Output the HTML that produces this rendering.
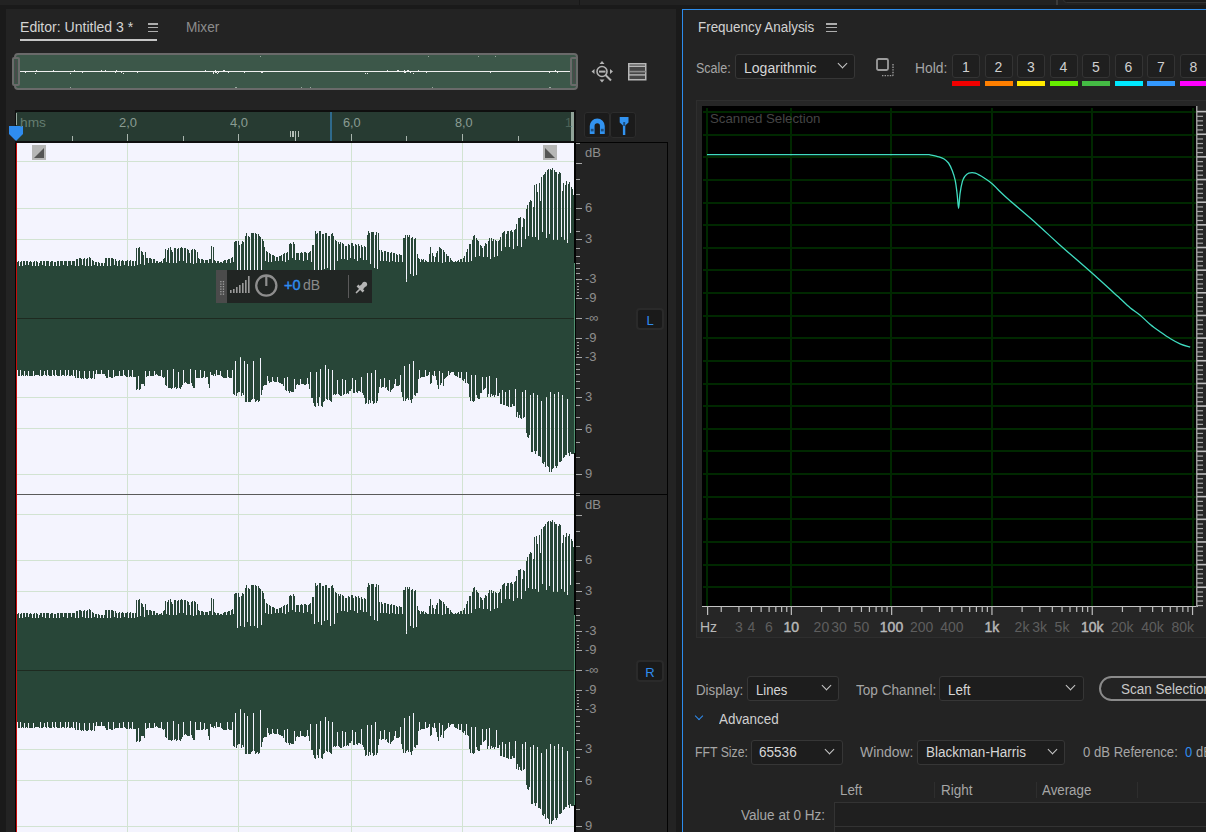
<!DOCTYPE html>
<html><head><meta charset="utf-8">
<style>
*{box-sizing:border-box;margin:0;padding:0}
html,body{width:1206px;height:832px;overflow:hidden;background:#1a1a1a;font-family:"Liberation Sans",sans-serif}
.a{position:absolute}
.t{position:absolute;white-space:nowrap;line-height:16px}
.dbl{position:absolute;left:585px;font-size:13px;color:#8e8e8e;line-height:16px;white-space:nowrap}
.tk{position:absolute;left:576px;width:4px;height:1px;background:#a0a0a0}
.dd{position:absolute;background:#1d1d1d;border:1px solid #363636;border-radius:3px}
.chev{position:absolute;width:7px;height:7px;border-right:1.5px solid #c8c8c8;border-bottom:1.5px solid #c8c8c8;transform:rotate(45deg)}
.hb{position:absolute;background:#1f1f1f;border:1px solid #333;border-radius:3px;color:#cfcfcf;font-size:14px;text-align:center;line-height:24px}
.hc{position:absolute;height:5px}
.lbl{color:#a6a6a6;font-size:13px}
.val{color:#d6d6d6;font-size:13.5px}
</style></head><body>
<!-- top strip -->
<div class="a" style="left:0;top:0;width:1206px;height:5px;background:#222"></div>
<div class="a" style="left:579px;top:0;width:1px;height:5px;background:#181818"></div>
<div class="a" style="left:1056px;top:0;width:2px;height:5px;background:#3a3a3a"></div>
<div class="a" style="left:1063px;top:-4px;width:150px;height:7px;background:#1b1b1b;border:1px solid #333;border-radius:4px"></div>

<!-- LEFT PANEL -->
<div class="a" style="left:6px;top:9px;width:670px;height:823px;background:#232323"></div>
<div class="a" style="left:148px;top:23px;width:10px;height:1.6px;background:#adadad"></div>
<div class="a" style="left:148px;top:26.8px;width:10px;height:1.6px;background:#adadad"></div>
<div class="a" style="left:148px;top:30.6px;width:10px;height:1.6px;background:#adadad"></div>
<div class="a" style="left:20px;top:39px;width:137px;height:2px;background:#c6c6c6"></div>

<!-- overview -->
<div class="a" style="left:14px;top:53px;width:564px;height:37px;background:#3c5749;border:2px solid #6a6a6a;border-radius:4px"></div>
<div class="a" style="left:20px;top:71px;width:550px;height:1px;background:#f0f0f0"></div>
<svg class="a" style="left:0;top:0" width="600" height="100" fill="#e8e8e8" shape-rendering="crispEdges"><rect x="101" y="70" width="1" height="1"/><rect x="116" y="70" width="1" height="1"/><rect x="123" y="73" width="1" height="1"/><rect x="25" y="72" width="1" height="1"/><rect x="121" y="72" width="1" height="1"/><rect x="105" y="70" width="1" height="1"/><rect x="137" y="72" width="1" height="1"/><rect x="36" y="70" width="1" height="1"/><rect x="82" y="72" width="1" height="1"/><rect x="70" y="73" width="1" height="1"/><rect x="35" y="73" width="1" height="1"/><rect x="53" y="70" width="1" height="1"/><rect x="115" y="72" width="1" height="1"/><rect x="74" y="70" width="1" height="1"/><rect x="216" y="72" width="1" height="1"/><rect x="215" y="70" width="1" height="1"/><rect x="213" y="73" width="1" height="1"/><rect x="244" y="72" width="1" height="1"/><rect x="213" y="72" width="1" height="1"/><rect x="205" y="70" width="1" height="1"/><rect x="218" y="72" width="1" height="1"/><rect x="215" y="72" width="1" height="1"/><rect x="223" y="70" width="1" height="1"/><rect x="217" y="73" width="1" height="1"/><rect x="261" y="72" width="1" height="1"/><rect x="216" y="72" width="1" height="1"/><rect x="262" y="72" width="1" height="1"/><rect x="224" y="70" width="1" height="1"/><rect x="228" y="72" width="1" height="1"/><rect x="215" y="72" width="1" height="1"/><rect x="398" y="70" width="1" height="1"/><rect x="407" y="70" width="1" height="1"/><rect x="365" y="73" width="1" height="1"/><rect x="408" y="70" width="1" height="1"/><rect x="404" y="70" width="1" height="1"/><rect x="404" y="72" width="1" height="1"/><rect x="405" y="72" width="1" height="1"/><rect x="426" y="72" width="1" height="1"/><rect x="387" y="70" width="1" height="1"/><rect x="397" y="70" width="1" height="1"/><rect x="410" y="72" width="1" height="1"/><rect x="367" y="73" width="1" height="1"/><rect x="418" y="70" width="1" height="1"/><rect x="413" y="73" width="1" height="1"/><rect x="490" y="72" width="1" height="1"/><rect x="490" y="72" width="1" height="1"/><rect x="557" y="72" width="1" height="1"/><rect x="549" y="72" width="1" height="1"/><rect x="555" y="70" width="1" height="1"/><rect x="70" y="87" width="1" height="1" fill="#9aaaa0"/><rect x="235" y="87" width="1" height="1" fill="#9aaaa0"/><rect x="236" y="87" width="1" height="1" fill="#9aaaa0"/><rect x="260" y="56" width="1" height="1" fill="#9aaaa0"/><rect x="301" y="87" width="1" height="1" fill="#9aaaa0"/><rect x="310" y="87" width="1" height="1" fill="#9aaaa0"/><rect x="428" y="56" width="1" height="1" fill="#9aaaa0"/><rect x="432" y="87" width="1" height="1" fill="#9aaaa0"/><rect x="478" y="56" width="1" height="1" fill="#9aaaa0"/><rect x="495" y="56" width="1" height="1" fill="#9aaaa0"/><rect x="549" y="87" width="1" height="1" fill="#9aaaa0"/><rect x="550" y="87" width="1" height="1" fill="#9aaaa0"/></svg>
<div class="a" style="left:12px;top:57px;width:8px;height:29px;background:#3c5749;border:2px solid #6a6a6a;border-radius:2px"></div>
<div class="a" style="left:15px;top:60px;width:2px;height:23px;background:#4a4a4a"></div>
<div class="a" style="left:570px;top:57px;width:8px;height:29px;background:#3c5749;border:2px solid #6a6a6a;border-radius:2px"></div>
<div class="a" style="left:573px;top:60px;width:2px;height:23px;background:#4a4a4a"></div>

<!-- zoom icon -->
<svg class="a" style="left:588px;top:58px" width="28" height="28" viewBox="0 0 28 28">
 <circle cx="14" cy="13.5" r="5" fill="none" stroke="#b4b4b4" stroke-width="1.6"/>
 <rect x="11" y="12.6" width="6.5" height="2" fill="#b4b4b4"/>
 <line x1="17.5" y1="17" x2="23" y2="22.5" stroke="#b4b4b4" stroke-width="2"/>
 <path d="M14 3 L16.5 6 H11.5Z M14 24.5 L16.5 21.5 H11.5Z M3.5 13.5 L6.5 11 V16Z M25 13.5 L22 11 V16Z" fill="#b4b4b4"/>
</svg>
<!-- list icon -->
<svg class="a" style="left:626px;top:61px" width="24" height="22" viewBox="0 0 24 22">
 <rect x="2.75" y="2.75" width="17" height="16" fill="#464646" stroke="#b6b6b6" stroke-width="1.5"/>
 <rect x="3" y="4.6" width="17" height="1.4" fill="#b6b6b6"/>
 <rect x="3" y="9.8" width="17" height="1.6" fill="#8c8c8c"/>
 <rect x="3" y="13.2" width="17" height="1.4" fill="#b6b6b6"/>
</svg>

<!-- ruler -->
<div class="a" style="left:15px;top:110px;width:561px;height:33px;background:#0f0f0f"></div>
<div class="a" style="left:16px;top:112px;width:558px;height:29px;background:#273b32"></div>
<div class="a" style="left:16px;top:113px;width:1px;height:12px;background:#9aa9a1"></div>
<div class="a" style="left:127px;top:134px;width:1px;height:7px;background:#a8b4ad"></div>
<div class="a" style="left:238px;top:134px;width:1px;height:7px;background:#a8b4ad"></div>
<div class="a" style="left:351px;top:134px;width:1px;height:7px;background:#a8b4ad"></div>
<div class="a" style="left:462px;top:134px;width:1px;height:7px;background:#a8b4ad"></div>
<div class="a" style="left:72px;top:136px;width:1px;height:5px;background:#a8b4ad"></div>
<div class="a" style="left:183px;top:136px;width:1px;height:5px;background:#a8b4ad"></div>
<div class="a" style="left:406px;top:136px;width:1px;height:5px;background:#a8b4ad"></div>
<div class="a" style="left:518px;top:136px;width:1px;height:5px;background:#a8b4ad"></div>
<div class="a" style="left:289.5px;top:131px;width:1.3px;height:6px;background:#b4beb8"></div>
<div class="a" style="left:292.3px;top:131px;width:1.3px;height:6px;background:#b4beb8"></div>
<div class="a" style="left:295.2px;top:131px;width:1.3px;height:10px;background:#b4beb8"></div>
<div class="a" style="left:298px;top:131px;width:1.3px;height:6px;background:#b4beb8"></div>
<div class="a" style="left:330px;top:112px;width:1.5px;height:29px;background:#2f6a8c"></div>
<div class="a" style="left:571px;top:112px;width:3px;height:29px;background:#90a398"></div>
<!-- playhead -->
<svg class="a" style="left:9px;top:126px" width="14" height="16" viewBox="0 0 14 16"><path d="M0 0H14V8L7 15L0 8Z" fill="#2f8cef"/></svg>

<!-- snap buttons -->
<div class="a" style="left:584px;top:112px;width:26px;height:26px;background:#1b1b1b;border:1px solid #2c2c2c;border-radius:3px"></div>
<div class="a" style="left:610px;top:112px;width:26px;height:26px;background:#1b1b1b;border:1px solid #2c2c2c;border-radius:3px"></div>
<svg class="a" style="left:584px;top:112px" width="26" height="26" viewBox="0 0 26 26">
 <path d="M5.75 22 V14 A7.5 7.5 0 0 1 20.75 14 V22 H15.95 V14 A2.7 2.7 0 0 0 10.55 14 V22 Z" fill="#3293f0"/>
 <rect x="6.8" y="16.8" width="2.8" height="2.6" fill="#1d4f80"/><rect x="16.9" y="16.8" width="2.8" height="2.6" fill="#1d4f80"/>
</svg>
<svg class="a" style="left:610px;top:112px" width="26" height="26" viewBox="0 0 26 26">
 <path d="M9.7 5 H18.5 V10.6 L15.3 13.5 V23 H12.9 V13.5 L9.7 10.6Z" fill="#3293f0"/>
 <rect x="13.2" y="10" width="2" height="4" fill="#1d4f80"/>
</svg>

<!-- dB ruler panels -->
<div class="a" style="left:574px;top:142px;width:94px;height:690px;background:#030303"></div>
<div class="a" style="left:576px;top:143px;width:91px;height:351px;background:#232323"></div>
<div class="a" style="left:576px;top:495px;width:91px;height:337px;background:#232323"></div>
<div class="dbl" style="top:144.5px">dB</div><div class="dbl" style="top:199.5px">6</div><div class="dbl" style="top:420.5px">6</div><div class="dbl" style="top:231.0px">3</div><div class="dbl" style="top:389.0px">3</div><div class="dbl" style="top:271.0px">-3</div><div class="dbl" style="top:349.0px">-3</div><div class="dbl" style="top:290.0px">-9</div><div class="dbl" style="top:330.0px">-9</div><div class="dbl" style="top:310.0px">-∞</div><div class="dbl" style="top:465.5px">9</div><div class="tk" style="top:318.0px;width:6px;background:#a8a8a8"></div><div class="tk" style="top:298.0px;width:6px;background:#a8a8a8"></div><div class="tk" style="top:338.0px;width:6px;background:#a8a8a8"></div><div class="tk" style="top:279.0px;width:6px;background:#a8a8a8"></div><div class="tk" style="top:357.0px;width:6px;background:#a8a8a8"></div><div class="tk" style="top:239.0px;width:6px;background:#a8a8a8"></div><div class="tk" style="top:397.0px;width:6px;background:#a8a8a8"></div><div class="tk" style="top:207.5px;width:6px;background:#a8a8a8"></div><div class="tk" style="top:428.5px;width:6px;background:#a8a8a8"></div><div class="tk" style="top:162.5px;width:6px;background:#a8a8a8"></div><div class="tk" style="top:473.5px;width:6px;background:#a8a8a8"></div><div class="tk" style="top:272.5px"></div><div class="tk" style="top:363.5px"></div><div class="tk" style="top:267.5px"></div><div class="tk" style="top:368.5px"></div><div class="tk" style="top:262.5px"></div><div class="tk" style="top:373.5px"></div><div class="tk" style="top:255.5px"></div><div class="tk" style="top:380.5px"></div><div class="tk" style="top:248.0px"></div><div class="tk" style="top:388.0px"></div><div class="tk" style="top:231.0px"></div><div class="tk" style="top:405.0px"></div><div class="tk" style="top:219.0px"></div><div class="tk" style="top:417.0px"></div><div class="tk" style="top:194.0px"></div><div class="tk" style="top:442.0px"></div><div class="tk" style="top:179.0px"></div><div class="tk" style="top:457.0px"></div><div class="tk" style="top:143.0px"></div><div class="tk" style="top:493.0px"></div><div class="tk" style="top:294.5px;left:577px;width:2px"></div><div class="tk" style="top:341.5px;left:577px;width:2px"></div><div class="tk" style="top:291.5px;left:577px;width:2px"></div><div class="tk" style="top:344.5px;left:577px;width:2px"></div><div class="tk" style="top:288.5px;left:577px;width:2px"></div><div class="tk" style="top:347.5px;left:577px;width:2px"></div><div class="tk" style="top:285.5px;left:577px;width:2px"></div><div class="tk" style="top:350.5px;left:577px;width:2px"></div><div class="tk" style="top:282.5px;left:577px;width:2px"></div><div class="tk" style="top:353.5px;left:577px;width:2px"></div>
<div class="dbl" style="top:496.5px">dB</div><div class="dbl" style="top:551.5px">6</div><div class="dbl" style="top:772.5px">6</div><div class="dbl" style="top:583.0px">3</div><div class="dbl" style="top:741.0px">3</div><div class="dbl" style="top:623.0px">-3</div><div class="dbl" style="top:701.0px">-3</div><div class="dbl" style="top:642.0px">-9</div><div class="dbl" style="top:682.0px">-9</div><div class="dbl" style="top:662.0px">-∞</div><div class="dbl" style="top:817.5px">9</div><div class="tk" style="top:670.0px;width:6px;background:#a8a8a8"></div><div class="tk" style="top:650.0px;width:6px;background:#a8a8a8"></div><div class="tk" style="top:690.0px;width:6px;background:#a8a8a8"></div><div class="tk" style="top:631.0px;width:6px;background:#a8a8a8"></div><div class="tk" style="top:709.0px;width:6px;background:#a8a8a8"></div><div class="tk" style="top:591.0px;width:6px;background:#a8a8a8"></div><div class="tk" style="top:749.0px;width:6px;background:#a8a8a8"></div><div class="tk" style="top:559.5px;width:6px;background:#a8a8a8"></div><div class="tk" style="top:780.5px;width:6px;background:#a8a8a8"></div><div class="tk" style="top:514.5px;width:6px;background:#a8a8a8"></div><div class="tk" style="top:825.5px;width:6px;background:#a8a8a8"></div><div class="tk" style="top:624.5px"></div><div class="tk" style="top:715.5px"></div><div class="tk" style="top:619.5px"></div><div class="tk" style="top:720.5px"></div><div class="tk" style="top:614.5px"></div><div class="tk" style="top:725.5px"></div><div class="tk" style="top:607.5px"></div><div class="tk" style="top:732.5px"></div><div class="tk" style="top:600.0px"></div><div class="tk" style="top:740.0px"></div><div class="tk" style="top:583.0px"></div><div class="tk" style="top:757.0px"></div><div class="tk" style="top:571.0px"></div><div class="tk" style="top:769.0px"></div><div class="tk" style="top:546.0px"></div><div class="tk" style="top:794.0px"></div><div class="tk" style="top:531.0px"></div><div class="tk" style="top:809.0px"></div><div class="tk" style="top:495.0px"></div><div class="tk" style="top:646.5px;left:577px;width:2px"></div><div class="tk" style="top:693.5px;left:577px;width:2px"></div><div class="tk" style="top:643.5px;left:577px;width:2px"></div><div class="tk" style="top:696.5px;left:577px;width:2px"></div><div class="tk" style="top:640.5px;left:577px;width:2px"></div><div class="tk" style="top:699.5px;left:577px;width:2px"></div><div class="tk" style="top:637.5px;left:577px;width:2px"></div><div class="tk" style="top:702.5px;left:577px;width:2px"></div><div class="tk" style="top:634.5px;left:577px;width:2px"></div><div class="tk" style="top:705.5px;left:577px;width:2px"></div>
<div class="a" style="left:636px;top:308px;width:28px;height:22px;background:#1a1a1a;border:2px solid #2a2a2a;border-radius:4px;color:#2f8cef;font-size:13px;text-align:center;line-height:19px;padding-top:1px">L</div>
<div class="a" style="left:636px;top:660px;width:28px;height:22px;background:#1a1a1a;border:2px solid #2a2a2a;border-radius:4px;color:#2f8cef;font-size:13px;text-align:center;line-height:19px;padding-top:1px">R</div>

<!-- waveform -->
<svg class="a" style="left:0;top:0" width="1206" height="832" viewBox="0 0 1206 832" shape-rendering="crispEdges">
 <rect x="16" y="143" width="558" height="351" fill="#f4f4fe"/>
 <rect x="16" y="495" width="558" height="337" fill="#f4f4fe"/>
 <rect x="16" y="494" width="558" height="1" fill="#5a5a5a"/>
 <rect x="16" y="161" width="558" height="1" fill="#d2e3d2"/><rect x="16" y="208" width="558" height="1" fill="#d2e3d2"/><rect x="16" y="239" width="558" height="1" fill="#d2e3d2"/><rect x="16" y="279" width="558" height="1" fill="#d2e3d2"/><rect x="16" y="297" width="558" height="1" fill="#d2e3d2"/><rect x="16" y="338" width="558" height="1" fill="#d2e3d2"/><rect x="16" y="357" width="558" height="1" fill="#d2e3d2"/><rect x="16" y="397" width="558" height="1" fill="#d2e3d2"/><rect x="16" y="428" width="558" height="1" fill="#d2e3d2"/><rect x="16" y="474" width="558" height="1" fill="#d2e3d2"/><rect x="127" y="143" width="1" height="351" fill="#d2e3d2"/><rect x="238" y="143" width="1" height="351" fill="#d2e3d2"/><rect x="351" y="143" width="1" height="351" fill="#d2e3d2"/><rect x="462" y="143" width="1" height="351" fill="#d2e3d2"/>
 <rect x="16" y="514" width="558" height="1" fill="#d2e3d2"/><rect x="16" y="560" width="558" height="1" fill="#d2e3d2"/><rect x="16" y="591" width="558" height="1" fill="#d2e3d2"/><rect x="16" y="631" width="558" height="1" fill="#d2e3d2"/><rect x="16" y="649" width="558" height="1" fill="#d2e3d2"/><rect x="16" y="690" width="558" height="1" fill="#d2e3d2"/><rect x="16" y="709" width="558" height="1" fill="#d2e3d2"/><rect x="16" y="749" width="558" height="1" fill="#d2e3d2"/><rect x="16" y="780" width="558" height="1" fill="#d2e3d2"/><rect x="16" y="826" width="558" height="1" fill="#d2e3d2"/><rect x="127" y="495" width="1" height="337" fill="#d2e3d2"/><rect x="238" y="495" width="1" height="337" fill="#d2e3d2"/><rect x="351" y="495" width="1" height="337" fill="#d2e3d2"/><rect x="462" y="495" width="1" height="337" fill="#d2e3d2"/>
 <path d="M17,262V262H18V261H19V266H20V262H21V261H22V266H23V261H24V261H25V265H26V261H27V261H28V265H29V262H30V261H31V262H32V266H33V262H34V261H35V266H36V261H37V262H38V266H39V263H40V261H41V261H42V265H43V261H44V261H45V266H46V261H47V261H48V261H49V266H50V262H51V261H52V261H53V266H54V262H55V262H56V266H57V261H58V261H59V266H60V261H61V261H62V261H63V265H64V261H65V261H66V261H67V266H68V261H69V261H70V261H71V265H72V261H73V261H74V261H75V266H76V259H77V259H78V266H79V258H80V258H81V259H82V265H83V259H84V258H85V266H86V259H87V258H88V266H89V257H90V258H91V266H92V260H93V261H94V265H95V262H96V262H97V266H98V262H99V263H100V266H101V263H102V263H103V266H104V263H105V258H106V258H107V266H108V258H109V258H110V266H111V258H112V258H113V259H114V265H115V259H116V261H117V266H118V261H119V260H120V266H121V261H122V260H123V261H124V265H125V261H126V261H127V260H128V266H129V261H130V260H131V266H132V261H133V261H134V266H135V261H136V248H137V265H138V248H139V247H140V264H141V251H142V252H143V255H144V265H145V252H146V258H147V258H148V263H149V258H150V258H151V259H152V263H153V259H154V259H155V263H156V261H157V261H158V263H159V262H160V262H161V261H162V263H163V259H164V258H165V249H166V262H167V250H168V248H169V263H170V247H171V250H172V252H173V263H174V248H175V248H176V263H177V249H178V248H179V261H180V248H181V247H182V248H183V261H184V248H185V248H186V263H187V249H188V250H189V253H190V263H191V250H192V249H193V264H194V249H195V250H196V263H197V252H198V258H199V259H200V263H201V259H202V259H203V260H204V263H205V260H206V260H207V260H208V263H209V259H210V259H211V246H212V263H213V247H214V260H215V261H216V263H217V261H218V261H219V263H220V262H221V262H222V263H223V261H224V260H225V260H226V263H227V260H228V259H229V259H230V263H231V258H232V257H233V262H234V242H235V241H236V241H237V276H238V241H239V245H240V274H241V244H242V241H243V242H244V275H245V236H246V233H247V270H248V236H249V237H250V274H251V233H252V233H253V233H254V274H255V233H256V234H257V276H258V234H259V236H260V237H261V273H262V239H263V241H264V247H265V261H266V251H267V252H268V262H269V253H270V254H271V262H272V255H273V255H274V256H275V261H276V257H277V257H278V261H279V256H280V256H281V255H282V261H283V254H284V253H285V262H286V253H287V252H288V260H289V244H290V243H291V244H292V258H293V242H294V244H295V260H296V253H297V253H298V253H299V260H300V253H301V252H302V253H303V261H304V252H305V252H306V253H307V260H308V253H309V252H310V251H311V262H312V245H313V245H314V272H315V231H316V234H317V233H318V270H319V231H320V231H321V273H322V234H323V234H324V269H325V233H326V233H327V268H328V236H329V236H330V274H331V234H332V233H333V236H334V272H335V240H336V241H337V261H338V242H339V244H340V242H341V259H342V243H343V244H344V259H345V246H346V246H347V260H348V244H349V245H350V258H351V243H352V243H353V246H354V259H355V244H356V245H357V261H358V244H359V246H360V258H361V245H362V247H363V260H364V246H365V247H366V260H367V235H368V231H369V233H370V264H371V232H372V232H373V232H374V268H375V235H376V232H377V269H378V233H379V250H380V261H381V250H382V252H383V261H384V251H385V251H386V261H387V252H388V252H389V262H390V253H391V252H392V261H393V253H394V253H395V262H396V254H397V255H398V262H399V254H400V255H401V255H402V262H403V238H404V238H405V235H406V282H407V235H408V237H409V235H410V274H411V238H412V237H413V276H414V239H415V238H416V275H417V254H418V258H419V259H420V262H421V259H422V260H423V259H424V262H425V260H426V261H427V262H428V262H429V254H430V247H431V262H432V253H433V256H434V262H435V257H436V253H437V251H438V262H439V247H440V248H441V249H442V263H443V250H444V252H445V262H446V254H447V256H448V256H449V262H450V258H451V260H452V261H453V262H454V262H455V261H456V262H457V261H458V260H459V262H460V259H461V259H462V262H463V258H464V256H465V262H466V252H467V249H468V262H469V244H470V244H471V261H472V240H473V236H474V235H475V257H476V238H477V240H478V241H479V256H480V245H481V246H482V248H483V257H484V246H485V243H486V244H487V257H488V241H489V238H490V259H491V238H492V241H493V239H494V257H495V240H496V241H497V256H498V241H499V240H500V237H501V251H502V233H503V232H504V231H505V247H506V234H507V231H508V231H509V247H510V231H511V230H512V232H513V249H514V230H515V229H516V224H517V246H518V218H519V218H520V217H521V247H522V227H523V218H524V219H525V239H526V209H527V205H528V236H529V202H530V200H531V201H532V237H533V207H534V185H535V237H536V184H537V192H538V240H539V183H540V201H541V177H542V232H543V175H544V174H545V172H546V238H547V170H548V169H549V234H550V169H551V170H552V168H553V240H554V170H555V172H556V172H557V240H558V174H559V172H560V173H561V237H562V191H563V183H564V240H565V185H566V181H567V243H568V184H569V182H570V233H571V187H572V189H573V195H574V454H573V454H572V454H571V452H570V456H569V453H568V399H567V455H566V455H565V457H564V458H563V395H562V461H561V462H560V462H559V392H558V466H557V468H556V466H555V394H554V468H553V469H552V472H551V392H550V472H549V467H548V466H547V397H546V467H545V462H544V464H543V463H542V401H541V457H540V456H539V456H538V395H537V451H536V454H535V451H534V393H533V452H532V452H531V395H530V435H529V438H528V437H527V433H526V390H525V417H524V418H523V392H522V419H521V418H520V415H519V418H518V412H517V417H516V389H515V406H514V406H513V404H512V407H511V407H510V390H509V407H508V406H507V406H506V392H505V405H504V405H503V390H502V404H501V404H500V393H499V396H498V396H497V378H496V395H495V397H494V395H493V396H492V394H491V397H490V376H489V394H488V397H487V377H486V388H485V389H484V390H483V377H482V393H481V393H480V399H479V399H478V398H477V395H476V375H475V401H474V402H473V401H472V375H471V401H470V397H469V384H468V383H467V372H466V383H465V379H464V381H463V380H462V372H461V378H460V378H459V372H458V377H457V376H456V376H455V375H454V372H453V372H452V372H451V373H450V375H449V371H448V376H447V377H446V378H445V379H444V386H443V373H442V383H441V385H440V371H439V389H438V385H437V380H436V376H435V371H434V376H433V375H432V383H431V384H430V372H429V375H428V376H427V376H426V370H425V377H424V377H423V377H422V377H421V378H420V370H419V379H418V393H417V393H416V396H415V395H414V361H413V399H412V403H411V400H410V364H409V400H408V398H407V399H406V401H405V366H404V401H403V397H402V392H401V375H400V385H399V386H398V386H397V386H396V379H395V384H394V388H393V389H392V390H391V392H390V380H389V391H388V390H387V387H386V388H385V378H384V387H383V387H382V388H381V379H380V387H379V393H378V401H377V403H376V370H375V403H374V404H373V401H372V373H371V403H370V400H369V404H368V373H367V403H366V404H365V398H364V395H363V393H362V377H361V392H360V391H359V391H358V393H357V392H356V380H355V393H354V393H353V378H352V389H351V391H350V391H349V394H348V393H347V394H346V380H345V394H344V395H343V379H342V396H341V396H340V395H339V394H338V380H337V394H336V395H335V394H334V395H333V370H332V402H331V401H330V400H329V369H328V400H327V399H326V365H325V401H324V402H323V407H322V406H321V369H320V397H319V406H318V403H317V372H316V407H315V406H314V403H313V398H312V398H311V372H310V389H309V384H308V378H307V384H306V385H305V385H304V384H303V384H302V384H301V379H300V385H299V385H298V384H297V385H296V389H295V379H294V392H293V392H292V392H291V391H290V393H289V391H288V377H287V391H286V390H285V378H284V386H283V384H282V384H281V383H280V383H279V382H278V377H277V382H276V382H275V382H274V381H273V377H272V382H271V382H270V383H269V381H268V376H267V385H266V385H265V385H264V386H263V390H262V395H261V358H260V401H259V402H258V400H257V401H256V402H255V399H254V361H253V399H252V400H251V402H250V402H249V402H248V364H247V402H246V402H245V361H244V395H243V393H242V396H241V357H240V392H239V392H238V393H237V396H236V361H235V395H234V394H233V370H232V378H231V378H230V378H229V377H228V370H227V378H226V378H225V378H224V378H223V377H222V376H221V371H220V375H219V375H218V375H217V370H216V376H215V374H214V376H213V375H212V375H211V372H210V388H209V384H208V377H207V377H206V378H205V371H204V377H203V378H202V378H201V370H200V378H199V378H198V378H197V378H196V370H195V388H194V388H193V386H192V383H191V369H190V384H189V384H188V384H187V383H186V382H185V383H184V370H183V385H182V387H181V389H180V388H179V372H178V388H177V389H176V387H175V388H174V369H173V388H172V389H171V388H170V388H169V388H168V370H167V386H166V385H165V377H164V378H163V377H162V370H161V376H160V376H159V376H158V375H157V374H156V375H155V371H154V376H153V376H152V376H151V376H150V371H149V376H148V376H147V377H146V371H145V386H144V384H143V384H142V384H141V389H140V390H139V376H138V389H137V390H136V377H135V377H134V377H133V370H132V377H131V376H130V377H129V370H128V377H127V377H126V376H125V375H124V370H123V376H122V376H121V376H120V371H119V376H118V376H117V376H116V376H115V377H114V370H113V378H112V378H111V377H110V377H109V370H108V378H107V378H106V376H105V374H104V374H103V374H102V370H101V374H100V374H99V374H98V374H97V370H96V374H95V379H94V371H93V378H92V379H91V378H90V371H89V378H88V379H87V379H86V378H85V371H84V379H83V378H82V379H81V378H80V371H79V378H78V378H77V370H76V378H75V376H74V370H73V376H72V375H71V376H70V376H69V370H68V375H67V376H66V370H65V376H64V375H63V375H62V376H61V370H60V376H59V376H58V376H57V375H56V370H55V376H54V375H53V370H52V376H51V376H50V376H49V375H48V370H47V376H46V375H45V371H44V375H43V376H42V376H41V370H40V376H39V375H38V375H37V375H36V375H35V376H34V371H33V376H32V376H31V376H30V376H29V371H28V376H27V375H26V376H25V371H24V376H23V375H22V376H21V370H20V376H19V376H18V370H17V376Z" fill="#284638"/>
 <path d="M17,614V614H18V613H19V618H20V614H21V613H22V618H23V613H24V613H25V617H26V613H27V613H28V617H29V614H30V613H31V614H32V618H33V614H34V613H35V618H36V613H37V614H38V618H39V615H40V613H41V613H42V617H43V613H44V613H45V618H46V613H47V613H48V613H49V618H50V614H51V613H52V613H53V618H54V614H55V614H56V618H57V613H58V613H59V618H60V613H61V613H62V613H63V617H64V613H65V613H66V613H67V618H68V613H69V613H70V613H71V617H72V613H73V613H74V613H75V618H76V611H77V611H78V618H79V610H80V610H81V611H82V617H83V611H84V610H85V618H86V611H87V610H88V618H89V609H90V610H91V618H92V612H93V613H94V617H95V614H96V614H97V618H98V614H99V615H100V618H101V615H102V615H103V618H104V615H105V610H106V610H107V618H108V610H109V610H110V618H111V610H112V610H113V611H114V617H115V611H116V613H117V618H118V613H119V612H120V618H121V613H122V612H123V613H124V617H125V613H126V613H127V612H128V618H129V613H130V612H131V618H132V613H133V613H134V618H135V613H136V600H137V617H138V600H139V599H140V616H141V603H142V604H143V607H144V617H145V604H146V610H147V610H148V615H149V610H150V610H151V611H152V615H153V611H154V611H155V615H156V613H157V613H158V615H159V614H160V614H161V613H162V615H163V611H164V610H165V601H166V614H167V602H168V600H169V615H170V599H171V602H172V604H173V615H174V600H175V600H176V615H177V601H178V600H179V613H180V600H181V599H182V600H183V613H184V600H185V600H186V615H187V601H188V602H189V605H190V615H191V602H192V601H193V616H194V601H195V602H196V615H197V604H198V610H199V611H200V615H201V611H202V611H203V612H204V615H205V612H206V612H207V612H208V615H209V611H210V611H211V598H212V615H213V599H214V612H215V613H216V615H217V613H218V613H219V615H220V614H221V614H222V615H223V613H224V612H225V612H226V615H227V612H228V611H229V611H230V615H231V610H232V609H233V614H234V594H235V593H236V593H237V628H238V593H239V597H240V626H241V596H242V593H243V594H244V627H245V588H246V585H247V622H248V588H249V589H250V626H251V585H252V585H253V585H254V626H255V585H256V586H257V628H258V586H259V588H260V589H261V625H262V591H263V593H264V599H265V613H266V603H267V604H268V614H269V605H270V606H271V614H272V607H273V607H274V608H275V613H276V609H277V609H278V613H279V608H280V608H281V607H282V613H283V606H284V605H285V614H286V605H287V604H288V612H289V596H290V595H291V596H292V610H293V594H294V596H295V612H296V605H297V605H298V605H299V612H300V605H301V604H302V605H303V613H304V604H305V604H306V605H307V612H308V605H309V604H310V603H311V614H312V597H313V597H314V624H315V583H316V586H317V585H318V622H319V583H320V583H321V625H322V586H323V586H324V621H325V585H326V585H327V620H328V588H329V588H330V626H331V586H332V585H333V588H334V624H335V592H336V593H337V613H338V594H339V596H340V594H341V611H342V595H343V596H344V611H345V598H346V598H347V612H348V596H349V597H350V610H351V595H352V595H353V598H354V611H355V596H356V597H357V613H358V596H359V598H360V610H361V597H362V599H363V612H364V598H365V599H366V612H367V587H368V583H369V585H370V616H371V584H372V584H373V584H374V620H375V587H376V584H377V621H378V585H379V602H380V613H381V602H382V604H383V613H384V603H385V603H386V613H387V604H388V604H389V614H390V605H391V604H392V613H393V605H394V605H395V614H396V606H397V607H398V614H399V606H400V607H401V607H402V614H403V590H404V590H405V587H406V634H407V587H408V589H409V587H410V626H411V590H412V589H413V628H414V591H415V590H416V627H417V606H418V610H419V611H420V614H421V611H422V612H423V611H424V614H425V612H426V613H427V614H428V614H429V606H430V599H431V614H432V605H433V608H434V614H435V609H436V605H437V603H438V614H439V599H440V600H441V601H442V615H443V602H444V604H445V614H446V606H447V608H448V608H449V614H450V610H451V612H452V613H453V614H454V614H455V613H456V614H457V613H458V612H459V614H460V611H461V611H462V614H463V610H464V608H465V614H466V604H467V601H468V614H469V596H470V596H471V613H472V592H473V588H474V587H475V609H476V590H477V592H478V593H479V608H480V597H481V598H482V600H483V609H484V598H485V595H486V596H487V609H488V593H489V590H490V611H491V590H492V593H493V591H494V609H495V592H496V593H497V608H498V593H499V592H500V589H501V603H502V585H503V584H504V583H505V599H506V586H507V583H508V583H509V599H510V583H511V582H512V584H513V601H514V582H515V581H516V576H517V598H518V570H519V570H520V569H521V599H522V579H523V570H524V571H525V591H526V561H527V557H528V588H529V554H530V552H531V553H532V589H533V559H534V537H535V589H536V536H537V544H538V592H539V535H540V553H541V529H542V584H543V527H544V526H545V524H546V590H547V522H548V521H549V586H550V521H551V522H552V520H553V592H554V522H555V524H556V524H557V592H558V526H559V524H560V525H561V589H562V543H563V535H564V592H565V537H566V533H567V595H568V536H569V534H570V585H571V539H572V541H573V547H574V806H573V806H572V806H571V804H570V808H569V805H568V751H567V807H566V807H565V809H564V810H563V747H562V813H561V814H560V814H559V744H558V818H557V820H556V818H555V746H554V820H553V821H552V824H551V744H550V824H549V819H548V818H547V749H546V819H545V814H544V816H543V815H542V753H541V809H540V808H539V808H538V747H537V803H536V806H535V803H534V745H533V804H532V804H531V747H530V787H529V790H528V789H527V785H526V742H525V769H524V770H523V744H522V771H521V770H520V767H519V770H518V764H517V769H516V741H515V758H514V758H513V756H512V759H511V759H510V742H509V759H508V758H507V758H506V744H505V757H504V757H503V742H502V756H501V756H500V745H499V748H498V748H497V730H496V747H495V749H494V747H493V748H492V746H491V749H490V728H489V746H488V749H487V729H486V740H485V741H484V742H483V729H482V745H481V745H480V751H479V751H478V750H477V747H476V727H475V753H474V754H473V753H472V727H471V753H470V749H469V736H468V735H467V724H466V735H465V731H464V733H463V732H462V724H461V730H460V730H459V724H458V729H457V728H456V728H455V727H454V724H453V724H452V724H451V725H450V727H449V723H448V728H447V729H446V730H445V731H444V738H443V725H442V735H441V737H440V723H439V741H438V737H437V732H436V728H435V723H434V728H433V727H432V735H431V736H430V724H429V727H428V728H427V728H426V722H425V729H424V729H423V729H422V729H421V730H420V722H419V731H418V745H417V745H416V748H415V747H414V713H413V751H412V755H411V752H410V716H409V752H408V750H407V751H406V753H405V718H404V753H403V749H402V744H401V727H400V737H399V738H398V738H397V738H396V731H395V736H394V740H393V741H392V742H391V744H390V732H389V743H388V742H387V739H386V740H385V730H384V739H383V739H382V740H381V731H380V739H379V745H378V753H377V755H376V722H375V755H374V756H373V753H372V725H371V755H370V752H369V756H368V725H367V755H366V756H365V750H364V747H363V745H362V729H361V744H360V743H359V743H358V745H357V744H356V732H355V745H354V745H353V730H352V741H351V743H350V743H349V746H348V745H347V746H346V732H345V746H344V747H343V731H342V748H341V748H340V747H339V746H338V732H337V746H336V747H335V746H334V747H333V722H332V754H331V753H330V752H329V721H328V752H327V751H326V717H325V753H324V754H323V759H322V758H321V721H320V749H319V758H318V755H317V724H316V759H315V758H314V755H313V750H312V750H311V724H310V741H309V736H308V730H307V736H306V737H305V737H304V736H303V736H302V736H301V731H300V737H299V737H298V736H297V737H296V741H295V731H294V744H293V744H292V744H291V743H290V745H289V743H288V729H287V743H286V742H285V730H284V738H283V736H282V736H281V735H280V735H279V734H278V729H277V734H276V734H275V734H274V733H273V729H272V734H271V734H270V735H269V733H268V728H267V737H266V737H265V737H264V738H263V742H262V747H261V710H260V753H259V754H258V752H257V753H256V754H255V751H254V713H253V751H252V752H251V754H250V754H249V754H248V716H247V754H246V754H245V713H244V747H243V745H242V748H241V709H240V744H239V744H238V745H237V748H236V713H235V747H234V746H233V722H232V730H231V730H230V730H229V729H228V722H227V730H226V730H225V730H224V730H223V729H222V728H221V723H220V727H219V727H218V727H217V722H216V728H215V726H214V728H213V727H212V727H211V724H210V740H209V736H208V729H207V729H206V730H205V723H204V729H203V730H202V730H201V722H200V730H199V730H198V730H197V730H196V722H195V740H194V740H193V738H192V735H191V721H190V736H189V736H188V736H187V735H186V734H185V735H184V722H183V737H182V739H181V741H180V740H179V724H178V740H177V741H176V739H175V740H174V721H173V740H172V741H171V740H170V740H169V740H168V722H167V738H166V737H165V729H164V730H163V729H162V722H161V728H160V728H159V728H158V727H157V726H156V727H155V723H154V728H153V728H152V728H151V728H150V723H149V728H148V728H147V729H146V723H145V738H144V736H143V736H142V736H141V741H140V742H139V728H138V741H137V742H136V729H135V729H134V729H133V722H132V729H131V728H130V729H129V722H128V729H127V729H126V728H125V727H124V722H123V728H122V728H121V728H120V723H119V728H118V728H117V728H116V728H115V729H114V722H113V730H112V730H111V729H110V729H109V722H108V730H107V730H106V728H105V726H104V726H103V726H102V722H101V726H100V726H99V726H98V726H97V722H96V726H95V731H94V723H93V730H92V731H91V730H90V723H89V730H88V731H87V731H86V730H85V723H84V731H83V730H82V731H81V730H80V723H79V730H78V730H77V722H76V730H75V728H74V722H73V728H72V727H71V728H70V728H69V722H68V727H67V728H66V722H65V728H64V727H63V727H62V728H61V722H60V728H59V728H58V728H57V727H56V722H55V728H54V727H53V722H52V728H51V728H50V728H49V727H48V722H47V728H46V727H45V723H44V727H43V728H42V728H41V722H40V728H39V727H38V727H37V727H36V727H35V728H34V723H33V728H32V728H31V728H30V728H29V723H28V728H27V727H26V728H25V723H24V728H23V727H22V728H21V722H20V728H19V728H18V722H17V728Z" fill="#284638"/>
 <rect x="16" y="318" width="558" height="1" fill="#1e2a20"/>
 <rect x="16" y="670" width="558" height="1" fill="#1e2a20"/>
 <rect x="574" y="263" width="1" height="190" fill="#4f8f6e"/><rect x="574" y="615" width="1" height="190" fill="#4f8f6e"/>
 <rect x="15" y="143" width="1" height="689" fill="#050505"/><rect x="16" y="143" width="1" height="689" fill="#c80c0c"/>
</svg>
<!-- fade handles -->
<div class="a" style="left:32px;top:145px;width:14px;height:15px;background:#b6b6b6"></div>
<svg class="a" style="left:32px;top:145px" width="14" height="15"><path d="M2 13 L12 3 V13Z" fill="#555"/></svg>
<div class="a" style="left:543px;top:145px;width:14px;height:15px;background:#b6b6b6"></div>
<svg class="a" style="left:543px;top:145px" width="14" height="15"><path d="M2 3 L12 13 H2Z" fill="#555"/></svg>

<!-- HUD -->
<div class="a" style="left:216px;top:270px;width:156px;height:33px;background:#212523"></div>
<div class="a" style="left:216px;top:270px;width:11px;height:33px;background:#4b4b4b"></div>
<svg class="a" style="left:216px;top:270px" width="156" height="33" viewBox="0 0 156 33">
 <g fill="#a0a0a0"><rect x="4.2" y="11" width="1.3" height="1.3"/><rect x="6.8" y="11" width="1.3" height="1.3"/><rect x="4.2" y="13.5" width="1.3" height="1.3"/><rect x="6.8" y="13.5" width="1.3" height="1.3"/><rect x="4.2" y="16" width="1.3" height="1.3"/><rect x="6.8" y="16" width="1.3" height="1.3"/><rect x="4.2" y="18.5" width="1.3" height="1.3"/><rect x="6.8" y="18.5" width="1.3" height="1.3"/><rect x="4.2" y="21" width="1.3" height="1.3"/><rect x="6.8" y="21" width="1.3" height="1.3"/><rect x="4.2" y="23.5" width="1.3" height="1.3"/><rect x="6.8" y="23.5" width="1.3" height="1.3"/></g>
 <g fill="#9a9a9a">
  <rect x="14" y="20" width="1.6" height="3"/><rect x="17" y="19" width="1.6" height="4"/><rect x="20" y="17" width="1.6" height="6"/>
  <rect x="23" y="15" width="1.6" height="8"/><rect x="26" y="13" width="1.6" height="10"/><rect x="29" y="10" width="1.6" height="13"/>
  <rect x="32" y="6" width="1.6" height="17"/>
 </g>
 <circle cx="50.3" cy="15.6" r="10.1" fill="none" stroke="#8e8e8e" stroke-width="2.3"/>
 <rect x="49.2" y="6" width="2.2" height="10" fill="#8e8e8e"/>
 <rect x="132" y="5" width="1" height="23" fill="#5a5a5a"/>
 <g fill="#b4b4b4">
  <line x1="140.5" y1="22.5" x2="145" y2="18" stroke="#b4b4b4" stroke-width="1.7" stroke-linecap="round"/>
  <path d="M140.6 16.4 L142.4 14.4 L148.4 20.6 L146.6 22.4Z"/>
  <path d="M143 16.5 L146.5 20 L150.2 15.6 L147.4 12.8Z"/>
  <circle cx="148.6" cy="14.2" r="2.5"/>
 </g>
</svg>
<div class="t" style="left:284px;top:277px;font-size:14.5px;color:#2f8cef;-webkit-text-stroke:0.4px #2f8cef">+0</div>
<div class="t" style="left:303px;top:277px;font-size:14px;color:#8a8a8a">dB</div>

<!-- RIGHT PANEL -->
<div class="a" style="left:682px;top:9px;width:530px;height:830px;background:#232323;border:1px solid #2d8ceb"></div>
<div class="a" style="left:826px;top:23px;width:11px;height:1.6px;background:#adadad"></div>
<div class="a" style="left:826px;top:26.8px;width:11px;height:1.6px;background:#adadad"></div>
<div class="a" style="left:826px;top:30.6px;width:11px;height:1.6px;background:#adadad"></div>

<div class="dd" style="left:735px;top:54px;width:120px;height:25px"></div>
<div class="chev" style="left:839px;top:60px"></div>

<svg class="a" style="left:874px;top:56px" width="22" height="22" viewBox="0 0 22 22">
 <rect x="3" y="3" width="11" height="11" rx="1.5" fill="none" stroke="#9c9c9c" stroke-width="1.8"/>
 <path d="M8 19.6 H19" stroke="#9a9a9a" stroke-width="1.4" stroke-dasharray="1.4 1.2" fill="none"/><path d="M19 8 V20" stroke="#9a9a9a" stroke-width="1.4" stroke-dasharray="1.4 1.2" fill="none"/>
</svg>
<div class="hb" style="left:952px;top:54px;width:28px;height:24px">1</div>
<div class="hb" style="left:984.5px;top:54px;width:28px;height:24px">2</div>
<div class="hb" style="left:1017px;top:54px;width:28px;height:24px">3</div>
<div class="hb" style="left:1049.5px;top:54px;width:28px;height:24px">4</div>
<div class="hb" style="left:1082px;top:54px;width:28px;height:24px">5</div>
<div class="hb" style="left:1114.5px;top:54px;width:28px;height:24px">6</div>
<div class="hb" style="left:1147px;top:54px;width:28px;height:24px">7</div>
<div class="hb" style="left:1179.5px;top:54px;width:28px;height:24px">8</div>
<div class="hc" style="left:952px;top:81px;width:28px;background:#f20000"></div>
<div class="hc" style="left:984.5px;top:81px;width:28px;background:#ff7f00"></div>
<div class="hc" style="left:1017px;top:81px;width:28px;background:#ffea00"></div>
<div class="hc" style="left:1049.5px;top:81px;width:28px;background:#66ee00"></div>
<div class="hc" style="left:1082px;top:81px;width:28px;background:#44bb44"></div>
<div class="hc" style="left:1114.5px;top:81px;width:28px;background:#00e8ff"></div>
<div class="hc" style="left:1147px;top:81px;width:28px;background:#3399ff"></div>
<div class="hc" style="left:1179.5px;top:81px;width:28px;background:#ff00ff"></div>

<!-- graph -->
<div class="a" style="left:696px;top:100px;width:520px;height:538px;background:#262626;border:1px solid #2e2e2e"></div>
<svg class="a" style="left:0;top:0" width="1206" height="832" viewBox="0 0 1206 832">
 <rect x="702" y="106" width="494" height="500" fill="#000"/>
 <g shape-rendering="crispEdges"><rect x="703" y="111" width="494" height="2" fill="#002800"/><rect x="703" y="134" width="494" height="2" fill="#002800"/><rect x="703" y="156" width="494" height="2" fill="#002800"/><rect x="703" y="179" width="494" height="2" fill="#002800"/><rect x="703" y="202" width="494" height="2" fill="#002800"/><rect x="703" y="224" width="494" height="2" fill="#002800"/><rect x="703" y="247" width="494" height="2" fill="#002800"/><rect x="703" y="269" width="494" height="2" fill="#002800"/><rect x="703" y="292" width="494" height="2" fill="#002800"/><rect x="703" y="315" width="494" height="2" fill="#002800"/><rect x="703" y="337" width="494" height="2" fill="#002800"/><rect x="703" y="360" width="494" height="2" fill="#002800"/><rect x="703" y="383" width="494" height="2" fill="#002800"/><rect x="703" y="405" width="494" height="2" fill="#002800"/><rect x="703" y="428" width="494" height="2" fill="#002800"/><rect x="703" y="450" width="494" height="2" fill="#002800"/><rect x="703" y="473" width="494" height="2" fill="#002800"/><rect x="703" y="496" width="494" height="2" fill="#002800"/><rect x="703" y="518" width="494" height="2" fill="#002800"/><rect x="703" y="541" width="494" height="2" fill="#002800"/><rect x="703" y="564" width="494" height="2" fill="#002800"/><rect x="703" y="586" width="494" height="2" fill="#002800"/><rect x="706" y="108" width="2" height="498" fill="#002800"/><rect x="790" y="108" width="2" height="498" fill="#002800"/><rect x="890" y="108" width="2" height="498" fill="#002800"/><rect x="991" y="108" width="2" height="498" fill="#002800"/><rect x="1091" y="108" width="2" height="498" fill="#002800"/><rect x="1192" y="108" width="2" height="498" fill="#002800"/></g>
 <rect x="702" y="606" width="496" height="1" fill="#c4c4c4"/>
 <rect x="1196" y="106" width="1.5" height="501" fill="#9a9a9a"/>
 <rect x="720.64" y="606" width="1.2" height="6" fill="#bdbdbd"/><rect x="738.31" y="606" width="1.2" height="6" fill="#bdbdbd"/><rect x="750.84" y="606" width="1.2" height="6" fill="#bdbdbd"/><rect x="760.56" y="606" width="1.2" height="6" fill="#bdbdbd"/><rect x="768.50" y="606" width="1.2" height="6" fill="#bdbdbd"/><rect x="775.21" y="606" width="1.2" height="6" fill="#bdbdbd"/><rect x="781.03" y="606" width="1.2" height="6" fill="#bdbdbd"/><rect x="786.16" y="606" width="1.2" height="6" fill="#bdbdbd"/><rect x="790.75" y="606" width="1.2" height="9" fill="#bdbdbd"/><rect x="820.94" y="606" width="1.2" height="6" fill="#bdbdbd"/><rect x="838.61" y="606" width="1.2" height="6" fill="#bdbdbd"/><rect x="851.14" y="606" width="1.2" height="6" fill="#bdbdbd"/><rect x="860.86" y="606" width="1.2" height="6" fill="#bdbdbd"/><rect x="868.80" y="606" width="1.2" height="6" fill="#bdbdbd"/><rect x="875.51" y="606" width="1.2" height="6" fill="#bdbdbd"/><rect x="881.33" y="606" width="1.2" height="6" fill="#bdbdbd"/><rect x="886.46" y="606" width="1.2" height="6" fill="#bdbdbd"/><rect x="891.05" y="606" width="1.2" height="9" fill="#bdbdbd"/><rect x="921.24" y="606" width="1.2" height="6" fill="#bdbdbd"/><rect x="938.91" y="606" width="1.2" height="6" fill="#bdbdbd"/><rect x="951.44" y="606" width="1.2" height="6" fill="#bdbdbd"/><rect x="961.16" y="606" width="1.2" height="6" fill="#bdbdbd"/><rect x="969.10" y="606" width="1.2" height="6" fill="#bdbdbd"/><rect x="975.81" y="606" width="1.2" height="6" fill="#bdbdbd"/><rect x="981.63" y="606" width="1.2" height="6" fill="#bdbdbd"/><rect x="986.76" y="606" width="1.2" height="6" fill="#bdbdbd"/><rect x="991.35" y="606" width="1.2" height="9" fill="#bdbdbd"/><rect x="1021.54" y="606" width="1.2" height="6" fill="#bdbdbd"/><rect x="1039.21" y="606" width="1.2" height="6" fill="#bdbdbd"/><rect x="1051.74" y="606" width="1.2" height="6" fill="#bdbdbd"/><rect x="1061.46" y="606" width="1.2" height="6" fill="#bdbdbd"/><rect x="1069.40" y="606" width="1.2" height="6" fill="#bdbdbd"/><rect x="1076.11" y="606" width="1.2" height="6" fill="#bdbdbd"/><rect x="1081.93" y="606" width="1.2" height="6" fill="#bdbdbd"/><rect x="1087.06" y="606" width="1.2" height="6" fill="#bdbdbd"/><rect x="1091.65" y="606" width="1.2" height="9" fill="#bdbdbd"/><rect x="1121.84" y="606" width="1.2" height="6" fill="#bdbdbd"/><rect x="1139.51" y="606" width="1.2" height="6" fill="#bdbdbd"/><rect x="1152.04" y="606" width="1.2" height="6" fill="#bdbdbd"/><rect x="1161.76" y="606" width="1.2" height="6" fill="#bdbdbd"/><rect x="1169.70" y="606" width="1.2" height="6" fill="#bdbdbd"/><rect x="1176.41" y="606" width="1.2" height="6" fill="#bdbdbd"/><rect x="1182.23" y="606" width="1.2" height="6" fill="#bdbdbd"/><rect x="1187.36" y="606" width="1.2" height="6" fill="#bdbdbd"/><rect x="1191.95" y="606" width="1.2" height="9" fill="#bdbdbd"/><rect x="707" y="606" width="1.2" height="9" fill="#bdbdbd"/><rect x="1197" y="110.80" width="9" height="1.6" fill="#bdbdbd"/><rect x="1197" y="115.73" width="6" height="1.2" fill="#a8a8a8"/><rect x="1197" y="120.26" width="6" height="1.2" fill="#a8a8a8"/><rect x="1197" y="124.79" width="6" height="1.2" fill="#a8a8a8"/><rect x="1197" y="129.32" width="6" height="1.2" fill="#a8a8a8"/><rect x="1197" y="133.45" width="9" height="1.6" fill="#bdbdbd"/><rect x="1197" y="138.38" width="6" height="1.2" fill="#a8a8a8"/><rect x="1197" y="142.91" width="6" height="1.2" fill="#a8a8a8"/><rect x="1197" y="147.44" width="6" height="1.2" fill="#a8a8a8"/><rect x="1197" y="151.97" width="6" height="1.2" fill="#a8a8a8"/><rect x="1197" y="156.10" width="9" height="1.6" fill="#bdbdbd"/><rect x="1197" y="161.03" width="6" height="1.2" fill="#a8a8a8"/><rect x="1197" y="165.56" width="6" height="1.2" fill="#a8a8a8"/><rect x="1197" y="170.09" width="6" height="1.2" fill="#a8a8a8"/><rect x="1197" y="174.62" width="6" height="1.2" fill="#a8a8a8"/><rect x="1197" y="178.75" width="9" height="1.6" fill="#bdbdbd"/><rect x="1197" y="183.68" width="6" height="1.2" fill="#a8a8a8"/><rect x="1197" y="188.21" width="6" height="1.2" fill="#a8a8a8"/><rect x="1197" y="192.74" width="6" height="1.2" fill="#a8a8a8"/><rect x="1197" y="197.27" width="6" height="1.2" fill="#a8a8a8"/><rect x="1197" y="201.40" width="9" height="1.6" fill="#bdbdbd"/><rect x="1197" y="206.33" width="6" height="1.2" fill="#a8a8a8"/><rect x="1197" y="210.86" width="6" height="1.2" fill="#a8a8a8"/><rect x="1197" y="215.39" width="6" height="1.2" fill="#a8a8a8"/><rect x="1197" y="219.92" width="6" height="1.2" fill="#a8a8a8"/><rect x="1197" y="224.05" width="9" height="1.6" fill="#bdbdbd"/><rect x="1197" y="228.98" width="6" height="1.2" fill="#a8a8a8"/><rect x="1197" y="233.51" width="6" height="1.2" fill="#a8a8a8"/><rect x="1197" y="238.04" width="6" height="1.2" fill="#a8a8a8"/><rect x="1197" y="242.57" width="6" height="1.2" fill="#a8a8a8"/><rect x="1197" y="246.70" width="9" height="1.6" fill="#bdbdbd"/><rect x="1197" y="251.63" width="6" height="1.2" fill="#a8a8a8"/><rect x="1197" y="256.16" width="6" height="1.2" fill="#a8a8a8"/><rect x="1197" y="260.69" width="6" height="1.2" fill="#a8a8a8"/><rect x="1197" y="265.22" width="6" height="1.2" fill="#a8a8a8"/><rect x="1197" y="269.35" width="9" height="1.6" fill="#bdbdbd"/><rect x="1197" y="274.28" width="6" height="1.2" fill="#a8a8a8"/><rect x="1197" y="278.81" width="6" height="1.2" fill="#a8a8a8"/><rect x="1197" y="283.34" width="6" height="1.2" fill="#a8a8a8"/><rect x="1197" y="287.87" width="6" height="1.2" fill="#a8a8a8"/><rect x="1197" y="292.00" width="9" height="1.6" fill="#bdbdbd"/><rect x="1197" y="296.93" width="6" height="1.2" fill="#a8a8a8"/><rect x="1197" y="301.46" width="6" height="1.2" fill="#a8a8a8"/><rect x="1197" y="305.99" width="6" height="1.2" fill="#a8a8a8"/><rect x="1197" y="310.52" width="6" height="1.2" fill="#a8a8a8"/><rect x="1197" y="314.65" width="9" height="1.6" fill="#bdbdbd"/><rect x="1197" y="319.58" width="6" height="1.2" fill="#a8a8a8"/><rect x="1197" y="324.11" width="6" height="1.2" fill="#a8a8a8"/><rect x="1197" y="328.64" width="6" height="1.2" fill="#a8a8a8"/><rect x="1197" y="333.17" width="6" height="1.2" fill="#a8a8a8"/><rect x="1197" y="337.30" width="9" height="1.6" fill="#bdbdbd"/><rect x="1197" y="342.23" width="6" height="1.2" fill="#a8a8a8"/><rect x="1197" y="346.76" width="6" height="1.2" fill="#a8a8a8"/><rect x="1197" y="351.29" width="6" height="1.2" fill="#a8a8a8"/><rect x="1197" y="355.82" width="6" height="1.2" fill="#a8a8a8"/><rect x="1197" y="359.95" width="9" height="1.6" fill="#bdbdbd"/><rect x="1197" y="364.88" width="6" height="1.2" fill="#a8a8a8"/><rect x="1197" y="369.41" width="6" height="1.2" fill="#a8a8a8"/><rect x="1197" y="373.94" width="6" height="1.2" fill="#a8a8a8"/><rect x="1197" y="378.47" width="6" height="1.2" fill="#a8a8a8"/><rect x="1197" y="382.60" width="9" height="1.6" fill="#bdbdbd"/><rect x="1197" y="387.53" width="6" height="1.2" fill="#a8a8a8"/><rect x="1197" y="392.06" width="6" height="1.2" fill="#a8a8a8"/><rect x="1197" y="396.59" width="6" height="1.2" fill="#a8a8a8"/><rect x="1197" y="401.12" width="6" height="1.2" fill="#a8a8a8"/><rect x="1197" y="405.25" width="9" height="1.6" fill="#bdbdbd"/><rect x="1197" y="410.18" width="6" height="1.2" fill="#a8a8a8"/><rect x="1197" y="414.71" width="6" height="1.2" fill="#a8a8a8"/><rect x="1197" y="419.24" width="6" height="1.2" fill="#a8a8a8"/><rect x="1197" y="423.77" width="6" height="1.2" fill="#a8a8a8"/><rect x="1197" y="427.90" width="9" height="1.6" fill="#bdbdbd"/><rect x="1197" y="432.83" width="6" height="1.2" fill="#a8a8a8"/><rect x="1197" y="437.36" width="6" height="1.2" fill="#a8a8a8"/><rect x="1197" y="441.89" width="6" height="1.2" fill="#a8a8a8"/><rect x="1197" y="446.42" width="6" height="1.2" fill="#a8a8a8"/><rect x="1197" y="450.55" width="9" height="1.6" fill="#bdbdbd"/><rect x="1197" y="455.48" width="6" height="1.2" fill="#a8a8a8"/><rect x="1197" y="460.01" width="6" height="1.2" fill="#a8a8a8"/><rect x="1197" y="464.54" width="6" height="1.2" fill="#a8a8a8"/><rect x="1197" y="469.07" width="6" height="1.2" fill="#a8a8a8"/><rect x="1197" y="473.20" width="9" height="1.6" fill="#bdbdbd"/><rect x="1197" y="478.13" width="6" height="1.2" fill="#a8a8a8"/><rect x="1197" y="482.66" width="6" height="1.2" fill="#a8a8a8"/><rect x="1197" y="487.19" width="6" height="1.2" fill="#a8a8a8"/><rect x="1197" y="491.72" width="6" height="1.2" fill="#a8a8a8"/><rect x="1197" y="495.85" width="9" height="1.6" fill="#bdbdbd"/><rect x="1197" y="500.78" width="6" height="1.2" fill="#a8a8a8"/><rect x="1197" y="505.31" width="6" height="1.2" fill="#a8a8a8"/><rect x="1197" y="509.84" width="6" height="1.2" fill="#a8a8a8"/><rect x="1197" y="514.37" width="6" height="1.2" fill="#a8a8a8"/><rect x="1197" y="518.50" width="9" height="1.6" fill="#bdbdbd"/><rect x="1197" y="523.43" width="6" height="1.2" fill="#a8a8a8"/><rect x="1197" y="527.96" width="6" height="1.2" fill="#a8a8a8"/><rect x="1197" y="532.49" width="6" height="1.2" fill="#a8a8a8"/><rect x="1197" y="537.02" width="6" height="1.2" fill="#a8a8a8"/><rect x="1197" y="541.15" width="9" height="1.6" fill="#bdbdbd"/><rect x="1197" y="546.08" width="6" height="1.2" fill="#a8a8a8"/><rect x="1197" y="550.61" width="6" height="1.2" fill="#a8a8a8"/><rect x="1197" y="555.14" width="6" height="1.2" fill="#a8a8a8"/><rect x="1197" y="559.67" width="6" height="1.2" fill="#a8a8a8"/><rect x="1197" y="563.80" width="9" height="1.6" fill="#bdbdbd"/><rect x="1197" y="568.73" width="6" height="1.2" fill="#a8a8a8"/><rect x="1197" y="573.26" width="6" height="1.2" fill="#a8a8a8"/><rect x="1197" y="577.79" width="6" height="1.2" fill="#a8a8a8"/><rect x="1197" y="582.32" width="6" height="1.2" fill="#a8a8a8"/><rect x="1197" y="586.45" width="9" height="1.6" fill="#bdbdbd"/><rect x="1197" y="591.38" width="6" height="1.2" fill="#a8a8a8"/><rect x="1197" y="595.91" width="6" height="1.2" fill="#a8a8a8"/><rect x="1197" y="600.44" width="6" height="1.2" fill="#a8a8a8"/><rect x="1197" y="604.97" width="6" height="1.2" fill="#a8a8a8"/>
 <path d="M707,154.6 L925,154.6 L929.20,154.60 C930.80,154.97 936.38,156.11 938.80,156.80 C941.22,157.49 942.08,157.72 943.70,158.75 C945.32,159.78 947.07,160.99 948.50,163.00 C949.93,165.01 951.18,167.90 952.30,170.80 C953.42,173.70 954.40,176.57 955.20,180.40 C956.00,184.23 956.53,189.15 957.10,193.80 C957.67,198.45 958.12,208.30 958.60,208.30 C959.08,208.30 959.37,198.30 960.00,193.80 C960.63,189.30 961.60,184.18 962.40,181.30 C963.20,178.42 963.75,177.85 964.80,176.50 C965.85,175.15 966.93,173.75 968.70,173.20 C970.47,172.65 972.68,172.32 975.40,173.20 C978.12,174.08 982.12,176.67 985.00,178.50 C987.88,180.33 990.30,182.12 992.70,184.20 C995.10,186.28 996.52,188.23 999.40,191.00 C1002.28,193.77 1003.80,195.35 1010.00,200.80 C1016.20,206.25 1028.43,216.47 1036.60,223.70 C1044.77,230.93 1049.82,236.02 1059.00,244.20 C1068.18,252.38 1082.50,264.63 1091.70,272.80 C1100.90,280.97 1109.48,288.93 1114.20,293.20 C1118.92,297.47 1117.35,295.98 1120.00,298.40 C1122.65,300.82 1126.73,304.90 1130.10,307.70 C1133.47,310.50 1136.83,312.40 1140.20,315.20 C1143.57,318.00 1146.93,321.70 1150.30,324.50 C1153.67,327.30 1157.03,329.62 1160.40,332.00 C1163.77,334.38 1167.13,336.77 1170.50,338.80 C1173.87,340.83 1177.32,342.80 1180.60,344.20 C1183.88,345.60 1188.60,346.70 1190.20,347.20" fill="none" stroke="#3fdcc0" stroke-width="1.3"/>
</svg>
<div class="t" style="left:700px;top:618.5px;font-size:14px;color:#b8b8b8">Hz</div><div class="t" style="left:698.8px;width:80px;text-align:center;top:618.5px;font-size:14px;color:#5e5e5e;font-weight:normal">3</div><div class="t" style="left:711.3px;width:80px;text-align:center;top:618.5px;font-size:14px;color:#5e5e5e;font-weight:normal">4</div><div class="t" style="left:729.0px;width:80px;text-align:center;top:618.5px;font-size:14px;color:#5e5e5e;font-weight:normal">6</div><div class="t" style="left:751.2px;width:80px;text-align:center;top:618.5px;font-size:14px;color:#b8b8b8;font-weight:normal;-webkit-text-stroke:0.45px #b8b8b8">10</div><div class="t" style="left:781.4px;width:80px;text-align:center;top:618.5px;font-size:14px;color:#5e5e5e;font-weight:normal">20</div><div class="t" style="left:799.1px;width:80px;text-align:center;top:618.5px;font-size:14px;color:#5e5e5e;font-weight:normal">30</div><div class="t" style="left:821.4px;width:80px;text-align:center;top:618.5px;font-size:14px;color:#5e5e5e;font-weight:normal">50</div><div class="t" style="left:851.5px;width:80px;text-align:center;top:618.5px;font-size:14px;color:#b8b8b8;font-weight:normal;-webkit-text-stroke:0.45px #b8b8b8">100</div><div class="t" style="left:881.7px;width:80px;text-align:center;top:618.5px;font-size:14px;color:#5e5e5e;font-weight:normal">200</div><div class="t" style="left:911.9px;width:80px;text-align:center;top:618.5px;font-size:14px;color:#5e5e5e;font-weight:normal">400</div><div class="t" style="left:951.9px;width:80px;text-align:center;top:618.5px;font-size:14px;color:#b8b8b8;font-weight:normal;-webkit-text-stroke:0.45px #b8b8b8">1k</div><div class="t" style="left:982.0px;width:80px;text-align:center;top:618.5px;font-size:14px;color:#5e5e5e;font-weight:normal">2k</div><div class="t" style="left:999.7px;width:80px;text-align:center;top:618.5px;font-size:14px;color:#5e5e5e;font-weight:normal">3k</div><div class="t" style="left:1022.0px;width:80px;text-align:center;top:618.5px;font-size:14px;color:#5e5e5e;font-weight:normal">5k</div><div class="t" style="left:1052.2px;width:80px;text-align:center;top:618.5px;font-size:14px;color:#b8b8b8;font-weight:normal;-webkit-text-stroke:0.45px #b8b8b8">10k</div><div class="t" style="left:1082.3px;width:80px;text-align:center;top:618.5px;font-size:14px;color:#5e5e5e;font-weight:normal">20k</div><div class="t" style="left:1112.5px;width:80px;text-align:center;top:618.5px;font-size:14px;color:#5e5e5e;font-weight:normal">40k</div><div class="t" style="left:1142.7px;width:80px;text-align:center;top:618.5px;font-size:14px;color:#5e5e5e;font-weight:normal">80k</div>

<!-- bottom controls -->
<div class="dd" style="left:747px;top:676px;width:92px;height:25px"></div>
<div class="chev" style="left:823px;top:682px"></div>
<div class="dd" style="left:939px;top:676px;width:145px;height:25px"></div>
<div class="chev" style="left:1067px;top:682px"></div>
<div class="a" style="left:1099px;top:676px;width:140px;height:25px;border:2px solid #8a8a8a;border-radius:13px"></div>

<div class="chev" style="left:696px;top:713px;width:6px;height:6px;border-color:#2f8cef"></div>

<div class="dd" style="left:751px;top:740px;width:92px;height:25px"></div>
<div class="chev" style="left:826px;top:746px"></div>
<div class="dd" style="left:917px;top:740px;width:148px;height:25px"></div>
<div class="chev" style="left:1049px;top:746px"></div>

<div class="a" style="left:934px;top:782px;width:1px;height:16px;background:#2e2e2e"></div>
<div class="a" style="left:1036px;top:782px;width:1px;height:16px;background:#2e2e2e"></div>
<div class="a" style="left:1137px;top:782px;width:1px;height:16px;background:#2e2e2e"></div>
<div class="a" style="left:834px;top:802px;width:380px;height:40px;background:#1f1f1f;border:1px solid #333"></div>
<div class="a" style="left:834px;top:826px;width:380px;height:1px;background:#333"></div>
<div class="t" style="left:20.2px;top:19.15px;font-size:14px;color:#d4d4d4;transform:scaleX(1.004);transform-origin:0 0">Editor: Untitled 3 *</div>
<div class="t" style="left:185.7px;top:19.15px;font-size:14px;color:#8c8c8c;transform:scaleX(0.973);transform-origin:0 0">Mixer</div>
<div class="t" style="left:697.7px;top:18.75px;font-size:14px;color:#d2d2d2;transform:scaleX(0.958);transform-origin:0 0">Frequency Analysis</div>
<div class="t" style="left:695.6px;top:59.75px;font-size:14px;color:#a6a6a6;transform:scaleX(0.892);transform-origin:0 0">Scale:</div>
<div class="t" style="left:743.5px;top:59.75px;font-size:14px;color:#d6d6d6;transform:scaleX(1.002);transform-origin:0 0">Logarithmic</div>
<div class="t" style="left:914.7px;top:59.95px;font-size:14px;color:#a6a6a6;transform:scaleX(0.988);transform-origin:0 0">Hold:</div>
<div class="t" style="left:709.5px;top:111.10px;font-size:13px;color:#454545;transform:scaleX(1.019);transform-origin:0 0">Scanned Selection</div>
<div class="t" style="left:695.7px;top:681.65px;font-size:14px;color:#a6a6a6;transform:scaleX(0.950);transform-origin:0 0">Display:</div>
<div class="t" style="left:756.0px;top:681.65px;font-size:14px;color:#d6d6d6;transform:scaleX(0.935);transform-origin:0 0">Lines</div>
<div class="t" style="left:856.3px;top:681.65px;font-size:14px;color:#a6a6a6;transform:scaleX(0.972);transform-origin:0 0">Top Channel:</div>
<div class="t" style="left:948.3px;top:681.65px;font-size:14px;color:#d6d6d6;transform:scaleX(0.959);transform-origin:0 0">Left</div>
<div class="t" style="left:1121.0px;top:681.35px;font-size:14px;color:#c8c8c8;transform:scaleX(0.964);transform-origin:0 0">Scan Selection</div>
<div class="t" style="left:719.4px;top:711.45px;font-size:14px;color:#d0d0d0;transform:scaleX(0.957);transform-origin:0 0">Advanced</div>
<div class="t" style="left:694.6px;top:744.45px;font-size:14px;color:#a6a6a6;transform:scaleX(0.876);transform-origin:0 0">FFT Size:</div>
<div class="t" style="left:759.3px;top:744.45px;font-size:14px;color:#d6d6d6;transform:scaleX(0.968);transform-origin:0 0">65536</div>
<div class="t" style="left:859.6px;top:744.45px;font-size:14px;color:#a6a6a6;transform:scaleX(0.995);transform-origin:0 0">Window:</div>
<div class="t" style="left:926.0px;top:744.45px;font-size:14px;color:#d6d6d6;transform:scaleX(0.966);transform-origin:0 0">Blackman-Harris</div>
<div class="t" style="left:1082.9px;top:744.15px;font-size:14px;color:#a6a6a6;transform:scaleX(0.937);transform-origin:0 0">0 dB Reference:</div>
<div class="t" style="left:1185.0px;top:744.15px;font-size:14px;color:#2f8cef;transform:scaleX(0.923);transform-origin:0 0">0</div>
<div class="t" style="left:1195.8px;top:744.15px;font-size:14px;color:#a6a6a6;transform:scaleX(0.934);transform-origin:0 0">dB</div>
<div class="t" style="left:839.5px;top:781.95px;font-size:14px;color:#a6a6a6;transform:scaleX(0.950);transform-origin:0 0">Left</div>
<div class="t" style="left:940.8px;top:781.95px;font-size:14px;color:#a6a6a6;transform:scaleX(0.964);transform-origin:0 0">Right</div>
<div class="t" style="left:1042.0px;top:781.95px;font-size:14px;color:#a6a6a6;transform:scaleX(0.950);transform-origin:0 0">Average</div>
<div class="t" style="left:741.0px;top:806.65px;font-size:14px;color:#a6a6a6;transform:scaleX(0.967);transform-origin:0 0">Value at 0 Hz:</div>
<div class="t" style="left:19.5px;top:115.32px;font-size:13.5px;color:#647d70;transform:scaleX(1.019);transform-origin:0 0">hms</div>
<div class="t" style="left:119.3px;top:115.32px;font-size:13.5px;color:#8a9c92;transform:scaleX(0.958);transform-origin:0 0">2,0</div>
<div class="t" style="left:230.3px;top:115.32px;font-size:13.5px;color:#8a9c92;transform:scaleX(0.958);transform-origin:0 0">4,0</div>
<div class="t" style="left:343.3px;top:115.32px;font-size:13.5px;color:#8a9c92;transform:scaleX(0.942);transform-origin:0 0">6,0</div>
<div class="t" style="left:454.8px;top:115.32px;font-size:13.5px;color:#8a9c92;transform:scaleX(0.942);transform-origin:0 0">8,0</div>
<div class="t" style="left:565.0px;top:115.32px;font-size:13.5px;color:#4d6358;transform:scaleX(0.931);transform-origin:0 0">1</div>
</body></html>
